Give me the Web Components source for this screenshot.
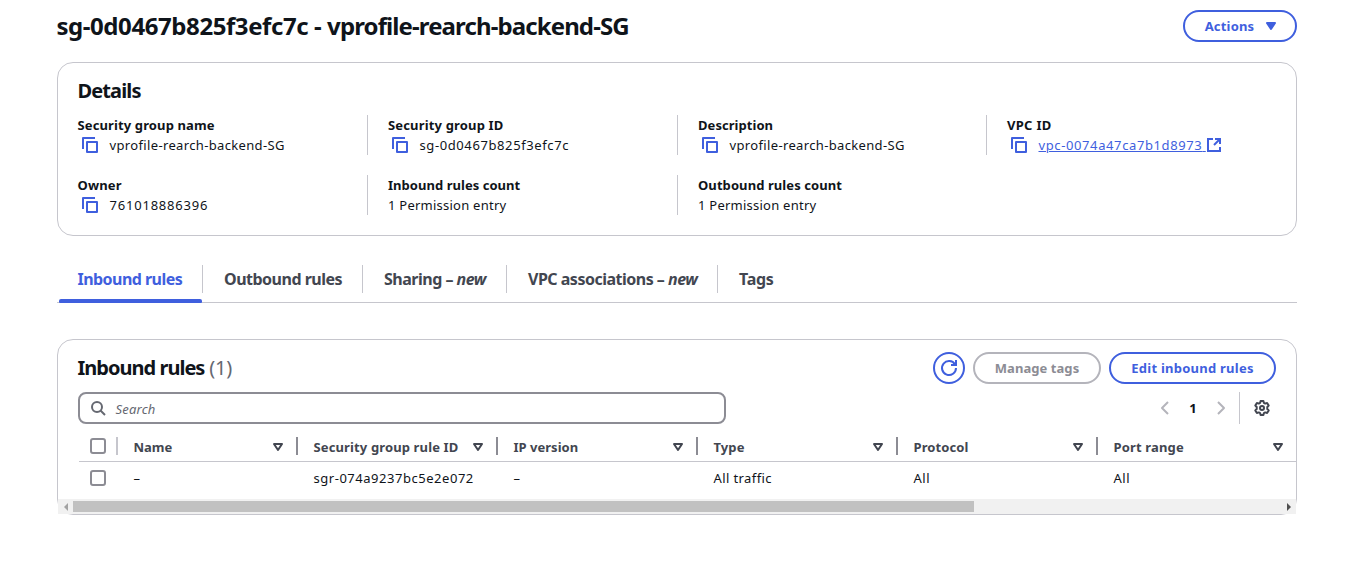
<!DOCTYPE html>
<html lang="en"><head><meta charset="utf-8"><title>Security group</title>
<style>
html,body{margin:0;background:#fff;overflow:hidden}
body{font:400 13px/20px "Noto Sans","Open Sans",sans-serif;color:#0f141a}
</style></head><body>
<sg-page></sg-page>
<script>
const define=(name,css,html)=>customElements.define(name,class extends HTMLElement{
  connectedCallback(){
    if(this.shadowRoot)return;
    const t=document.createElement('template');
    t.innerHTML=`<style>*{box-sizing:border-box}${css}</style>${typeof html==='function'?html(this):html}`;
    this.attachShadow({mode:'open'}).append(t.content.cloneNode(true));
  }
});

const ICONS={
  copy:'<path d="M15 5H5v10h10V5Z"/><path d="M13 1H1v11"/>',
  external:'<path d="M9 2h5v5"/><path d="m8 8 6-6"/><path d="M14 10v4H2V2h5"/>',
  refresh:'<path d="M10 5h5V0"/><path d="M15 8a7 7 0 1 1-1-3.6"/>',
  search:'<circle cx="7" cy="7" r="5"/><path d="m15 15-4.500-4.500"/>',
  left:'<path d="M11 2 5 8l6 6"/>',
  right:'<path d="m5 2 6 6-6 6"/>',
  caret:'<path d="M4 5h8l-4 6-4-6Z" fill="currentColor"/>',
  sort:'<path d="M4 5h8l-4 6-4-6Z"/>',
  gear:'<path d="M6.6 1h2.8l.5 1.9 1.3.7 1.9-.6 1.6 2.6L13.300 7v2l1.4 1.4-1.600 2.600-1.900-.6-1.300.7-.5 1.900H6.600l-.5-1.900-1.300-.7-1.900.6-1.600-2.600L2.700 9V7L1.300 5.600 2.900 3l1.900.6 1.300-.7Z"/><circle cx="8" cy="8" r="2"/>'
};
define('ui-icon',`:host{display:inline-block;width:16px;height:16px;flex:none}
svg{display:block;width:100%;height:100%;overflow:visible;fill:none;stroke:currentColor;stroke-width:2;stroke-linejoin:round}
svg.sharp{stroke-linejoin:miter}`,
 e=>{const n=e.getAttribute('name');return `<svg viewBox="0 0 16 16" class="${/external|refresh/.test(n)?'sharp':''}">${ICONS[n]}</svg>`});

define('ui-button',`:host{display:flex;align-items:center;justify-content:center;gap:9px;height:32px;border:2px solid #3f5fde;border-radius:20px;color:#3f5fde;font-weight:700;flex:none;box-sizing:border-box}
:host([disabled]){color:#8c8c94;border-color:#b4b4bb}`,'<slot></slot>');

define('ui-card',`:host{display:block;box-sizing:border-box;border:1px solid #c6c6cd;border-radius:16px}`,'<slot></slot>');

define('kv-pair',`:host{display:block;height:40px;border-left:1px solid #c6c6cd;padding-left:20px;box-sizing:border-box}
:host([first]){border:0;padding-left:0}
.l{font-weight:700}.v{display:flex;align-items:center;height:20px;white-space:pre}
ui-icon{color:#3f5fde;margin:0 11.5px 0 4px}`,
 e=>`<div class="l"><slot name="label"></slot></div><div class="v">${e.hasAttribute('copy')?'<ui-icon name="copy"></ui-icon>':''}<slot></slot></div>`);

define('ext-link',`:host{display:flex;align-items:center;color:#3f5fde;white-space:pre}
.t{text-decoration:underline;text-underline-offset:1px;width:167.5px}`,
 '<span class="t"><slot></slot></span><ui-icon name="external"></ui-icon>');

define('sg-details',`:host{display:block}
ui-card{height:174px;padding:15px 20px 0}
h2{margin:0 0 12px -.5px;font:700 20px/25px "Noto Sans",sans-serif;letter-spacing:-.88px}
.g{display:grid;grid-template-columns:289px 310px 309px 290px;row-gap:20px}
span{white-space:pre}`,`
<ui-card><h2>Details</h2><div class="g">
<kv-pair first copy><span slot="label" style="letter-spacing:.12px;margin-left:-.5px">Security group name</span><span style="letter-spacing:.35px">vprofile-rearch-backend-SG</span></kv-pair>
<kv-pair copy><span slot="label" style="letter-spacing:.16px">Security group ID</span><span style="letter-spacing:.6px">sg-0d0467b825f3efc7c</span></kv-pair>
<kv-pair copy><span slot="label" style="letter-spacing:.05px">Description</span><span style="letter-spacing:.35px">vprofile-rearch-backend-SG</span></kv-pair>
<kv-pair copy><span slot="label" style="letter-spacing:.3px">VPC ID</span><ext-link><span style="letter-spacing:.61px">vpc-0074a47ca7b1d8973</span> </ext-link></kv-pair>
<kv-pair first copy><span slot="label" style="letter-spacing:.15px;margin-left:-.5px">Owner</span><span style="letter-spacing:.79px">761018886396</span></kv-pair>
<kv-pair><span slot="label" style="letter-spacing:.04px">Inbound rules count</span><span style="letter-spacing:.24px">1 Permission entry</span></kv-pair>
<kv-pair><span slot="label" style="letter-spacing:.08px">Outbound rules count</span><span style="letter-spacing:.24px">1 Permission entry</span></kv-pair>
</div></ui-card>`);

define('ui-tab',`:host{display:block;position:relative;height:37px;box-sizing:border-box;padding:4px 0 0 21px;font:700 16px/20px "Noto Sans",sans-serif;color:#424650;letter-spacing:-.5px;white-space:pre}
:host(:not([last]))::after{content:"";position:absolute;right:0;top:0;height:28px;width:1px;background:#c6c6cd}
:host([active]){color:#3f5fde}
:host([active])::before{content:"";position:absolute;left:2px;right:1px;bottom:-1px;height:4px;border-radius:2px 2px 1px 1px;background:#3f5fde;z-index:1}`,'<slot></slot>');

define('sg-tabs',`:host{display:flex;height:38px;border-bottom:1px solid #c6c6cd;box-sizing:border-box}`,`
<ui-tab active style="width:146px;padding-left:20.5px;letter-spacing:-.54px">Inbound rules</ui-tab>
<ui-tab style="width:160px">Outbound rules</ui-tab>
<ui-tab style="width:144px">Sharing – <i>new</i></ui-tab>
<ui-tab style="width:211px">VPC associations – <i>new</i></ui-tab>
<ui-tab last style="letter-spacing:-.3px">Tags</ui-tab>`);

define('check-box',`:host{display:block;width:16px;height:16px;border:2px solid #8c8c94;border-radius:3px;box-sizing:border-box;flex:none}`,'');

define('th-cell',`:host{display:flex;align-items:center;width:200px;height:27px;flex:none;box-sizing:border-box;padding:0 12px 0 15.5px;font-weight:700;color:#424650;position:relative;white-space:nowrap}
:host::before,:host(*)::before{content:"";position:absolute;left:-2px;top:4px;width:2px;height:18px;background:var(--sep,#8c8c94)}
span{flex:1}`,'<span><slot></slot></span><ui-icon name="sort"></ui-icon>');

define('td-cell',`:host{display:block;width:200px;flex:none;box-sizing:border-box;padding-left:15.5px}`,'<slot></slot>');

define('scroll-bar',`:host{display:flex;align-items:center;height:15px;background:#f1f1f1}
.a{width:15px;height:15px;display:grid;place-items:center;flex:none}
.tr{flex:1}.th{width:901px;height:11px;background:#c1c1c1}
svg{display:block}`,`
<div class="a"><svg width="4" height="8"><path d="M4 0v8L0 4z" fill="#a3a3a3"/></svg></div>
<div class="tr"><div class="th"></div></div>
<div class="a"><svg width="4" height="8"><path d="M0 0v8l4-4z" fill="#505050"/></svg></div>`);

define('sg-rules',`:host{display:block}
ui-card{height:176px}
.h{display:flex;align-items:center;gap:8px;padding:12px 20px 0;height:44px}
h2{margin:-2px 0 0 -.5px;flex:1;font:700 20px/25px "Noto Sans",sans-serif;letter-spacing:-.98px}
h2 span{font-weight:400;color:#656871;letter-spacing:-.1px;margin-left:.5px}
.f{display:flex;align-items:center;padding:8px 20px 0;height:40px}
.s{width:648px;height:32px;border:2px solid #8c8c94;border-radius:8px;display:flex;align-items:center;padding-left:10px;gap:9.5px;color:#656871;font-style:italic}
.s span{padding-top:2px}
.p{margin-left:auto;display:flex;align-items:center;height:32px;color:#b4b4bb}
.p b{width:40px;text-align:center;font-weight:700;color:#0f141a}
.d{width:1px;height:32px;background:#c6c6cd;margin:0 14px 0 10px}
.t{overflow:hidden;margin-left:21px}
.r{display:flex;align-items:center;height:32px}
.hr{height:38px;border-bottom:1px solid #c6c6cd;padding-top:8px}
check-box{margin:0 12px 0 11px}
.hr check-box{margin-top:-2px}
.first{--sep:#c6c6cd}
span{white-space:pre}`,`
<ui-card>
<div class="h"><h2>Inbound rules <span>(1)</span></h2>
<ui-button style="width:32px"><ui-icon name="refresh"></ui-icon></ui-button>
<ui-button disabled style="width:128px;letter-spacing:.06px">Manage tags</ui-button>
<ui-button style="width:167px;letter-spacing:.24px">Edit inbound rules</ui-button></div>
<div class="f"><div class="s"><ui-icon name="search"></ui-icon><span style="letter-spacing:.2px">Search</span></div>
<div class="p"><ui-icon name="left"></ui-icon><b>1</b><ui-icon name="right"></ui-icon><div class="d"></div><ui-icon name="gear" style="color:#424650;margin-right:6px"></ui-icon></div></div>
<div class="t"><div class="r hr"><check-box></check-box>
<th-cell class="first" style="width:180px">Name</th-cell>
<th-cell style="letter-spacing:.13px">Security group rule ID</th-cell>
<th-cell style="letter-spacing:.02px">IP version</th-cell>
<th-cell style="letter-spacing:.1px">Type</th-cell>
<th-cell style="letter-spacing:.1px">Protocol</th-cell>
<th-cell style="letter-spacing:.15px">Port range</th-cell></div>
<div class="r"><check-box></check-box>
<td-cell style="width:180px">–</td-cell>
<td-cell style="letter-spacing:.53px">sgr-074a9237bc5e2e072</td-cell>
<td-cell>–</td-cell>
<td-cell style="letter-spacing:.4px">All traffic</td-cell>
<td-cell style="letter-spacing:.5px">All</td-cell>
<td-cell style="letter-spacing:.5px">All</td-cell></div></div>
<scroll-bar style="margin-top:5px"></scroll-bar>
</ui-card>`);

define('sg-page',`:host{display:block;width:1240px;margin-left:57px;padding-top:10px}
header{display:flex;align-items:center;justify-content:space-between;height:32px;margin-bottom:20px}
h1{margin:0 0 0 -.6px;font:700 24px/30px "Noto Sans",sans-serif;letter-spacing:-.89px;white-space:pre}
h1 span{letter-spacing:-.42px}
ui-button span{margin-left:4px}
sg-tabs{margin:29px 0 36px}`,`
<header><h1><span>sg-0d0467b825f3efc7c - </span>vprofile-rearch-backend-SG</h1>
<ui-button style="width:114px;letter-spacing:.18px"><span>Actions</span><ui-icon name="caret"></ui-icon></ui-button></header>
<sg-details></sg-details><sg-tabs></sg-tabs><sg-rules></sg-rules>`);
</script></body></html>
